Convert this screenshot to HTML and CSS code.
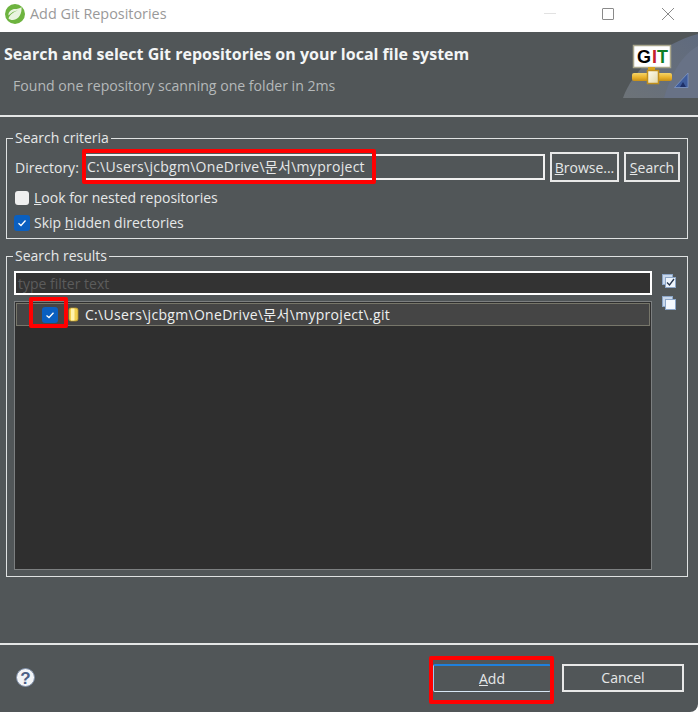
FILE: index.html
```html
<!DOCTYPE html>
<html lang="en">
<head>
<meta charset="utf-8">
<title>Add Git Repositories</title>
<link rel="stylesheet" href="styles.css">
</head>
<body>
<div class="dialog">
  <header class="titlebar">
    <svg class="app-icon" width="20" height="20" viewBox="0 0 20 20">
      <circle cx="10" cy="10" r="10" fill="#6db33f"/>
      <path d="M16.500 3C17 9 14.500 15.500 8 16C6 16.100 4.500 15.500 3.500 14.500C4.500 10.500 9 7.500 13 6.500C9.500 6.500 6 9 3.500 11.500C3 7.500 7 5 10 5C12 5 15 4.500 16.500 3Z" fill="#e9f4df"/>
    </svg>
    <span class="title">Add Git Repositories</span>
    <div class="win-controls">
      <span class="win-min"></span>
      <span class="win-max"></span>
      <svg class="win-close" width="14" height="14" viewBox="0 0 14 14"><path d="M1 1L13 13M13 1L1 13" stroke="#8a8a8a" stroke-width="1" fill="none"/></svg>
    </div>
  </header>

  <section class="banner">
    <div class="banner-text">
      <h1>Search and select Git repositories on your local file system</h1>
      <p>Found one repository scanning one folder in 2ms</p>
    </div>
    <svg class="banner-art" width="78" height="66" viewBox="0 0 78 66">
      <defs>
        <linearGradient id="sky" x1="0" y1="1" x2="1" y2="0">
          <stop offset="0" stop-color="#6d7378"/>
          <stop offset="1" stop-color="#5f6a7e"/>
        </linearGradient>
        <linearGradient id="pipe" x1="0" y1="0" x2="0" y2="1">
          <stop offset="0" stop-color="#f5d468"/>
          <stop offset="0.55" stop-color="#e9b22c"/>
          <stop offset="1" stop-color="#c68f18"/>
        </linearGradient>
        <linearGradient id="valve" x1="0" y1="0" x2="1" y2="1">
          <stop offset="0" stop-color="#fffdf0"/>
          <stop offset="1" stop-color="#e0d6a8"/>
        </linearGradient>
      </defs>
      <path d="M3 66C12 40 40 12 78 2V66Z" fill="url(#sky)"/>
      <path d="M44 66C50 44 62 22 78 14V66Z" fill="#687286"/>
      <rect x="13.500" y="13.500" width="37" height="22" fill="#fff" stroke="#a9a68c" stroke-width="1.500"/>
      <text x="17" y="31" class="git-g">G</text><text x="32" y="31" class="git-i">I</text><text x="37" y="31" class="git-t">T</text>
      <rect x="28" y="35" width="7" height="4" fill="#d9a520"/>
      <rect x="12" y="41" width="40" height="8" rx="2" fill="url(#pipe)"/>
      <rect x="27.500" y="38.500" width="11" height="13" fill="url(#valve)" stroke="#c08f1c" stroke-width="1.500"/>
      <path d="M54.500 55.500L68 41V55.500Z" fill="#3e5c9c" stroke="#8098c4" stroke-width="0.800"/>
      <path d="M60 55L63 50L66 55Z" fill="#1e3068"/>
    </svg>
  </section>

  <main class="content">
    <fieldset class="group criteria">
      <legend>Search criteria</legend>
      <div class="dir-row">
        <label class="dir-label">Directory:</label>
        <div class="text-input dir-input">C:\Users\jcbgm\OneDrive\문서\myproject</div>
        <button class="btn browse"><u>B</u>rowse...</button>
        <button class="btn search"><u>S</u>earch</button>
      </div>
      <div class="check-row first-check">
        <span class="check off"></span>
        <span><u>L</u>ook for nested repositories</span>
      </div>
      <div class="check-row">
        <span class="check on"><svg width="16" height="16" viewBox="0 0 16 16"><path d="M4.500 8.300L7 10.500L11.500 5.500" stroke="#fff" stroke-width="1.300" fill="none"/></svg></span>
        <span>Skip <u>h</u>idden directories</span>
      </div>
    </fieldset>

    <fieldset class="group results">
      <legend>Search results</legend>
      <div class="results-grid">
        <div class="results-main">
          <div class="filter">type filter text</div>
          <div class="tree">
            <div class="tree-row">
              <span class="check on tree-check"><svg width="16" height="16" viewBox="0 0 16 16"><path d="M4.500 8.500L7 10.500L11.500 5.800" stroke="#fff" stroke-width="1.300" fill="none"/></svg></span>
              <svg class="repo-icon" width="11" height="15" viewBox="0 0 11 15">
                <rect x="1" y="1" width="9" height="13" rx="2" fill="#f0cf4e" stroke="#b8962a" stroke-width="0.800"/>
                <rect x="3" y="1.500" width="3.500" height="12" fill="#fff3ad"/>
              </svg>
              <span class="repo-path">C:\Users\jcbgm\OneDrive\문서\myproject\.git</span>
            </div>
          </div>
        </div>
        <div class="side-tools">
          <svg width="14" height="14" viewBox="0 0 14 14">
            <rect x="0.500" y="0.500" width="10" height="10" fill="#c9d8ec" stroke="#8ca6c8"/>
            <rect x="3.500" y="3.500" width="10" height="10" fill="#eef4fb" stroke="#8ca6c8"/>
            <path d="M5 8.500L7.500 11L12 5" stroke="#27364f" stroke-width="1.300" fill="none"/>
          </svg>
          <svg width="14" height="14" viewBox="0 0 14 14">
            <rect x="0.500" y="0.500" width="10" height="10" fill="#c9d8ec" stroke="#8ca6c8"/>
            <rect x="3.500" y="3.500" width="10" height="10" fill="#f4f8fd" stroke="#8ca6c8"/>
          </svg>
        </div>
      </div>
    </fieldset>
  </main>

  <footer class="footer">
    <svg class="help" width="19" height="19" viewBox="0 0 19 19">
      <circle cx="9.500" cy="9.500" r="9" fill="#f2f4f7" stroke="#7e8ea8"/>
      <text x="9.500" y="15.500" class="help-q">?</text>
    </svg>
    <button class="btn action add"><u>A</u>dd</button>
    <button class="btn action cancel">Cancel</button>
  </footer>

  <div class="mark mark-dir"></div>
  <div class="mark mark-check"></div>
  <div class="mark mark-add"></div>
</div>
</body>
</html>
```

FILE: styles.css
```css
* { box-sizing: border-box; }
html, body { margin: 0; padding: 0; background: #fff; }
body { width: 699px; height: 712px; overflow: hidden; }

.dialog {
  position: relative;
  width: 698px;
  height: 712px;
  display: flex;
  flex-direction: column;
  background: #515658;
  border-bottom-right-radius: 8px;
  overflow: hidden;
  font-family: "Open Sans", "Noto Sans CJK KR", sans-serif;
  font-size: 14px;
  color: #e6e8e8;
}

.titlebar {
  height: 32px;
  background: #fff;
  display: flex;
  align-items: center;
  padding: 0 0 5px 5px;
  flex: none;
}
.app-icon { flex: none; }
.title { margin-left: 5px; font-size: 14.4px; color: #999; }
.win-controls { margin-left: auto; display: flex; align-items: center; }
.win-min { width: 12px; height: 1px; background: #e2e2e2; margin-right: 46px; }
.win-max { width: 12px; height: 12px; border: 1px solid #8a8a8a; border-radius: 1px; margin-right: 47px; }
.win-close { margin-right: 23px; }

.banner {
  height: 85px;
  flex: none;
  display: flex;
  justify-content: space-between;
  align-items: flex-start;
  border-bottom: 2px solid #e4e6e6;
}
.banner-text { padding-left: 4px; }
.banner h1 {
  margin: 12px 0 0;
  font-size: 16px;
  line-height: 20px;
  font-weight: 700;
  color: #f3f5f5;
}
.banner p {
  margin: 12px 0 0 9px;
  font-size: 14.1px;
  line-height: 20px;
  color: #b5b9ba;
}
.banner-art { flex: none; }
.banner-art text { font-family: "Liberation Sans", sans-serif; font-weight: 700; font-size: 18px; }
.git-g { fill: #000; }
.git-i { fill: #c4202a; }
.git-t { fill: #0f7d26; }

.content {
  flex: 1;
  padding: 12px 10px 0 6px;
  display: flex;
  flex-direction: column;
  gap: 8px;
}

.group {
  margin: 0;
  border: 1px solid #dfe2e2;
  padding: 0 7px;
  min-width: 0;
}
.group legend {
  padding: 0 2px;
  margin-left: -1px;
  line-height: 18px;
  color: #e6e8e8;
}
.criteria { height: 110px; }
.results { height: 330px; }

.dir-row { display: flex; align-items: center; height: 30px; margin-top: 5px; }
.dir-label { width: 69px; flex: none; padding-left: 1px; }
.text-input {
  width: 462px;
  height: 26px;
  border: 2px solid #f0f0f0;
  line-height: 22px;
  padding-left: 2px;
  white-space: nowrap;
  letter-spacing: 0.28px;
  flex: none;
}
.btn {
  font: inherit;
  color: #e6e8e8;
  background: transparent;
  border: 2px solid #e8e8e8;
  padding: 0;
  cursor: default;
}
.browse { width: 69px; height: 30px; margin-left: 5px; }
.search { width: 56px; height: 30px; margin-left: 5px; }

.check-row { display: flex; align-items: center; gap: 4px; height: 25px; }
.first-check { margin-top: 3px; }
.check {
  width: 16px;
  height: 16px;
  border-radius: 3px;
  display: block;
  flex: none;
}
.check svg { display: block; }
.check.off { background: #efefef; width: 14px; height: 14px; margin: 0 1px; }
.check.on { background: #0a5fc0; }

.results-grid { display: flex; height: 305px; margin-top: 6px; }
.results-main { width: 638px; display: flex; flex-direction: column; gap: 6px; flex: none; }
.filter {
  height: 24px;
  background: #333;
  border: 2px solid #fff;
  color: #5c5c5c;
  line-height: 21px;
  padding-left: 2px;
  flex: none;
}
.tree {
  height: 269px;
  background: #2f2f2f;
  border: 1px solid #7c7f80;
  padding: 1px;
  flex: none;
}
.tree-row {
  height: 23px;
  background: #454545;
  border: 1px solid #77766a;
  display: flex;
  align-items: center;
  padding-left: 25px;
}
.repo-icon { margin-left: 10px; flex: none; }
.repo-path { margin-left: 6px; color: #eef0f0; white-space: nowrap; letter-spacing: 0.3px; line-height: 17px; padding-bottom: 1px; }

.side-tools { display: flex; flex-direction: column; gap: 8px; padding: 3px 0 0 10px; }

.footer {
  height: 69px;
  flex: none;
  border-top: 2px solid #e4e6e6;
  display: flex;
  align-items: center;
  padding: 0 14px 0 16px;
}
.help { flex: none; margin-top: -2px; }
.help-q { font-family: "Liberation Sans", sans-serif; font-weight: 700; font-size: 17px; fill: #4c5f85; text-anchor: middle; }
.action { height: 28px; margin-top: -2px; }
.add {
  width: 118px;
  margin-left: auto;
  border-width: 2px 1px 1px;
  border-color: #1f80dc #9cc8ee #d8e8f6;
  border-radius: 2px;
}
.cancel { width: 122px; margin-left: 11px; }

.mark { position: absolute; border: 4px solid #f00; border-radius: 2px; pointer-events: none; }
.mark-dir { left: 82px; top: 149px; width: 294px; height: 35px; }
.mark-check { left: 29px; top: 297px; width: 39px; height: 31px; }
.mark-add { left: 429px; top: 656px; width: 125px; height: 48px; }
```
